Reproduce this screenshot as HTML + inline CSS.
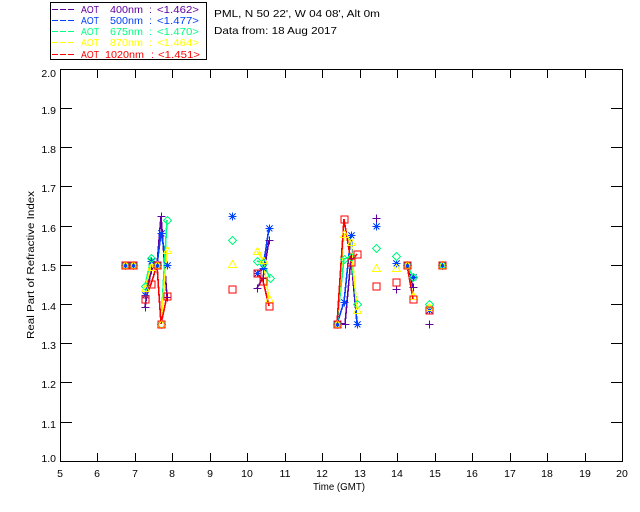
<!DOCTYPE html>
<html><head><meta charset="utf-8"><style>
html,body{margin:0;padding:0;background:#fff;width:640px;height:512px;overflow:hidden}
svg{display:block}
text{font-family:"Liberation Sans",sans-serif;font-size:10.5px;fill:#000}
.l{stroke-width:1.6;fill:none;shape-rendering:crispEdges}
.m{stroke-width:1;fill:none;shape-rendering:crispEdges}
</style></head><body>
<svg width="640" height="512" viewBox="0 0 640 512" xmlns="http://www.w3.org/2000/svg">
<defs>
<path id="p" d="M-4 0H4M0 -4V4"/>
<path id="s" d="M-4 0H4M0 -4V4M-3 -3L3 3M-3 3L3 -3M-1 0H1M0 -1V1"/>
<path id="d" d="M0 -4L4 0L0 4L-4 0Z"/>
<path id="t" d="M0 -4L4 3H-4Z"/>
<rect id="q" x="-4" y="-4" width="7" height="7"/>
</defs>
<!-- legend -->
<rect x="50.5" y="2.5" width="156" height="57" fill="none" stroke="#000" stroke-width="1" shape-rendering="crispEdges"/>
<g stroke-width="1" stroke-dasharray="6 2" shape-rendering="crispEdges">
<path d="M52 9.5H75" stroke="#6000a0"/><path d="M52 20.5H75" stroke="#0040ff"/><path d="M52 31.5H75" stroke="#00ff80"/><path d="M52 42.5H75" stroke="#ffff00"/><path d="M52 54.5H75" stroke="#ff0000"/>
</g>
<text x="81" y="13" textLength="18" lengthAdjust="spacingAndGlyphs" style="fill:#6000a0">AOT</text><text x="110" y="13" textLength="33" lengthAdjust="spacingAndGlyphs" style="fill:#6000a0">400nm</text><text x="149" y="13" style="fill:#6000a0">:</text><text x="157" y="13" textLength="42" lengthAdjust="spacingAndGlyphs" style="fill:#6000a0">&lt;1.462&gt;</text>
<text x="81" y="24" textLength="18" lengthAdjust="spacingAndGlyphs" style="fill:#0040ff">AOT</text><text x="110" y="24" textLength="33" lengthAdjust="spacingAndGlyphs" style="fill:#0040ff">500nm</text><text x="149" y="24" style="fill:#0040ff">:</text><text x="157" y="24" textLength="42" lengthAdjust="spacingAndGlyphs" style="fill:#0040ff">&lt;1.477&gt;</text>
<text x="81" y="35" textLength="18" lengthAdjust="spacingAndGlyphs" style="fill:#00ff80">AOT</text><text x="110" y="35" textLength="33" lengthAdjust="spacingAndGlyphs" style="fill:#00ff80">675nm</text><text x="149" y="35" style="fill:#00ff80">:</text><text x="157" y="35" textLength="42" lengthAdjust="spacingAndGlyphs" style="fill:#00ff80">&lt;1.470&gt;</text>
<text x="81" y="46" textLength="18" lengthAdjust="spacingAndGlyphs" style="fill:#ffff00">AOT</text><text x="110" y="46" textLength="33" lengthAdjust="spacingAndGlyphs" style="fill:#ffff00">870nm</text><text x="149" y="46" style="fill:#ffff00">:</text><text x="157" y="46" textLength="42" lengthAdjust="spacingAndGlyphs" style="fill:#ffff00">&lt;1.464&gt;</text>
<text x="81" y="58" textLength="18" lengthAdjust="spacingAndGlyphs" style="fill:#ff0000">AOT</text><text x="105" y="58" textLength="39" lengthAdjust="spacingAndGlyphs" style="fill:#ff0000">1020nm</text><text x="151" y="58" style="fill:#ff0000">:</text><text x="158" y="58" textLength="42" lengthAdjust="spacingAndGlyphs" style="fill:#ff0000">&lt;1.451&gt;</text>
<text x="214" y="17" textLength="166" lengthAdjust="spacingAndGlyphs">PML, N 50 22', W 04 08', Alt 0m</text>
<text x="214" y="34" textLength="123" lengthAdjust="spacingAndGlyphs">Data from: 18 Aug 2017</text>
<!-- axes -->
<rect x="60.5" y="69.5" width="562" height="392" fill="none" stroke="#000" stroke-width="1" shape-rendering="crispEdges"/>
<path shape-rendering="crispEdges" stroke="#000" stroke-width="1" fill="none" d="
M97.5 461V453M135.5 461V453M172.5 461V453M210.5 461V453M247.5 461V453M285.5 461V453M322.5 461V453M360.5 461V453M397.5 461V453M435.5 461V453M472.5 461V453M510.5 461V453M547.5 461V453M585.5 461V453
M97.5 70V78M135.5 70V78M172.5 70V78M210.5 70V78M247.5 70V78M285.5 70V78M322.5 70V78M360.5 70V78M397.5 70V78M435.5 70V78M472.5 70V78M510.5 70V78M547.5 70V78M585.5 70V78
M61 108.5H72M61 147.5H72M61 186.5H72M61 226.5H72M61 265.5H72M61 304.5H72M61 343.5H72M61 382.5H72M61 422.5H72
M622 108.5H611M622 147.5H611M622 186.5H611M622 226.5H611M622 265.5H611M622 304.5H611M622 343.5H611M622 382.5H611M622 422.5H611"/>
<g text-anchor="end">
<text x="56" y="77">2.0</text><text x="56" y="114">1.9</text><text x="56" y="153">1.8</text><text x="56" y="192">1.7</text><text x="56" y="232">1.6</text><text x="56" y="271">1.5</text><text x="56" y="310">1.4</text><text x="56" y="349">1.3</text><text x="56" y="388">1.2</text><text x="56" y="428">1.1</text><text x="56" y="462">1.0</text>
</g>
<g text-anchor="middle">
<text x="60" y="477">5</text><text x="97" y="477">6</text><text x="135" y="477">7</text><text x="172" y="477">8</text><text x="210" y="477">9</text><text x="247" y="477">10</text><text x="285" y="477">11</text><text x="322" y="477">12</text><text x="360" y="477">13</text><text x="397" y="477">14</text><text x="435" y="477">15</text><text x="472" y="477">16</text><text x="510" y="477">17</text><text x="547" y="477">18</text><text x="585" y="477">19</text><text x="622" y="477">20</text>
</g>
<text x="313" y="490" textLength="52" lengthAdjust="spacingAndGlyphs">Time (GMT)</text>
<text transform="translate(34 339) rotate(-90)" textLength="148" lengthAdjust="spacingAndGlyphs">Real Part of Refractive Index</text>
<!-- lines -->
<g class="l" stroke="#6000a0"><polyline points="145,307 151,270 157,265 161,216 167,297"/><polyline points="257,288 263,278 269,240"/><polyline points="337,324 345,324 351,258 357,324"/><polyline points="407,265 413,287"/></g>
<g class="l" stroke="#0040ff"><polyline points="145,295 151,261 157,265 161,233 167,265"/><polyline points="257,273 263,268 269,228"/><polyline points="337,324 344,302 351,235 357,324"/><polyline points="407,265 413,277"/></g>
<g class="l" stroke="#00ff80"><polyline points="145,286 151,258 157,265 161,324 167,220"/><polyline points="257,261 263,263 270,278"/><polyline points="337,324 344,259 351,257 357,304"/><polyline points="407,265 413,277"/></g>
<g class="l" stroke="#ffff00"><polyline points="145,288 151,267 157,265 161,324 167,250"/><polyline points="257,251 263,260 269,299"/><polyline points="337,324 344,234 351,242 357,310"/><polyline points="407,265 413,296"/></g>
<g class="l" stroke="#ff0000"><polyline points="145,299 151,284 157,265 161,324 167,296"/><polyline points="257,273 263,281 269,306"/><polyline points="337,324 344,219 351,262 357,254"/><polyline points="407,265 413,299"/></g>
<!-- markers -->
<g class="m" stroke="#6000a0">
<use href="#p" x="125.5" y="265.5"/><use href="#p" x="133.5" y="265.5"/><use href="#p" x="145.5" y="307.5"/><use href="#p" x="151.5" y="270.5"/><use href="#p" x="157.5" y="265.5"/><use href="#p" x="161.5" y="216.5"/><use href="#p" x="167.5" y="297.5"/>
<use href="#p" x="257.5" y="288.5"/><use href="#p" x="263.5" y="278.5"/><use href="#p" x="269.5" y="240.5"/>
<use href="#p" x="337.5" y="324.5"/><use href="#p" x="345.5" y="324.5"/><use href="#p" x="351.5" y="258.5"/><use href="#p" x="376.5" y="218.5"/>
<use href="#p" x="396.5" y="289.5"/><use href="#p" x="407.5" y="265.5"/><use href="#p" x="413.5" y="287.5"/><use href="#p" x="429.5" y="324.5"/><use href="#p" x="442.5" y="265.5"/>
</g>
<g class="m" stroke="#0040ff">
<use href="#s" x="125.5" y="265.5"/><use href="#s" x="133.5" y="265.5"/><use href="#s" x="145.5" y="295.5"/><use href="#s" x="151.5" y="261.5"/><use href="#s" x="157.5" y="265.5"/><use href="#s" x="161.5" y="233.5"/><use href="#s" x="167.5" y="265.5"/>
<use href="#s" x="232.5" y="216.5"/><use href="#s" x="257.5" y="273.5"/><use href="#s" x="263.5" y="268.5"/><use href="#s" x="269.5" y="228.5"/>
<use href="#s" x="337.5" y="324.5"/><use href="#s" x="344.5" y="302.5"/><use href="#s" x="351.5" y="235.5"/><use href="#s" x="357.5" y="324.5"/><use href="#s" x="376.5" y="226.5"/>
<use href="#s" x="396.5" y="263.5"/><use href="#s" x="407.5" y="265.5"/><use href="#s" x="413.5" y="277.5"/><use href="#s" x="429.5" y="310.5"/><use href="#s" x="442.5" y="265.5"/>
</g>
<g class="m" stroke="#00ff80">
<use href="#d" x="125.5" y="265.5"/><use href="#d" x="133.5" y="265.5"/><use href="#d" x="145.5" y="286.5"/><use href="#d" x="151.5" y="258.5"/><use href="#d" x="157.5" y="265.5"/><use href="#d" x="161.5" y="324.5"/><use href="#d" x="167.5" y="220.5"/>
<use href="#d" x="232.5" y="240.5"/><use href="#d" x="257.5" y="261.5"/><use href="#d" x="263.5" y="263.5"/><use href="#d" x="270.5" y="278.5"/>
<use href="#d" x="337.5" y="324.5"/><use href="#d" x="344.5" y="259.5"/><use href="#d" x="351.5" y="257.5"/><use href="#d" x="357.5" y="304.5"/><use href="#d" x="376.5" y="248.5"/>
<use href="#d" x="396.5" y="256.5"/><use href="#d" x="407.5" y="265.5"/><use href="#d" x="413.5" y="277.5"/><use href="#d" x="429.5" y="304.5"/><use href="#d" x="442.5" y="265.5"/>
</g>
<g class="m" stroke="#ffff00">
<use href="#t" x="125.5" y="265.5"/><use href="#t" x="133.5" y="265.5"/><use href="#t" x="145.5" y="288.5"/><use href="#t" x="151.5" y="267.5"/><use href="#t" x="157.5" y="265.5"/><use href="#t" x="161.5" y="324.5"/><use href="#t" x="167.5" y="250.5"/>
<use href="#t" x="232.5" y="264.5"/><use href="#t" x="257.5" y="251.5"/><use href="#t" x="263.5" y="260.5"/><use href="#t" x="269.5" y="299.5"/>
<use href="#t" x="337.5" y="324.5"/><use href="#t" x="344.5" y="234.5"/><use href="#t" x="351.5" y="242.5"/><use href="#t" x="357.5" y="310.5"/><use href="#t" x="376.5" y="268.5"/>
<use href="#t" x="396.5" y="268.5"/><use href="#t" x="407.5" y="265.5"/><use href="#t" x="413.5" y="296.5"/><use href="#t" x="429.5" y="307.5"/><use href="#t" x="442.5" y="265.5"/>
</g>
<g class="m" stroke="#ff0000">
<use href="#q" x="126" y="266"/><use href="#q" x="134" y="266"/><use href="#q" x="146" y="300"/><use href="#q" x="152" y="285"/><use href="#q" x="158" y="266"/><use href="#q" x="162" y="325"/><use href="#q" x="168" y="297"/>
<use href="#q" x="233" y="290"/><use href="#q" x="258" y="274"/><use href="#q" x="264" y="282"/><use href="#q" x="270" y="307"/>
<use href="#q" x="338" y="325"/><use href="#q" x="345" y="220"/><use href="#q" x="352" y="263"/><use href="#q" x="358" y="255"/><use href="#q" x="377" y="287"/>
<use href="#q" x="397" y="283"/><use href="#q" x="408" y="266"/><use href="#q" x="414" y="300"/><use href="#q" x="430" y="311"/><use href="#q" x="443" y="266"/>
</g>
</svg>
</body></html>
